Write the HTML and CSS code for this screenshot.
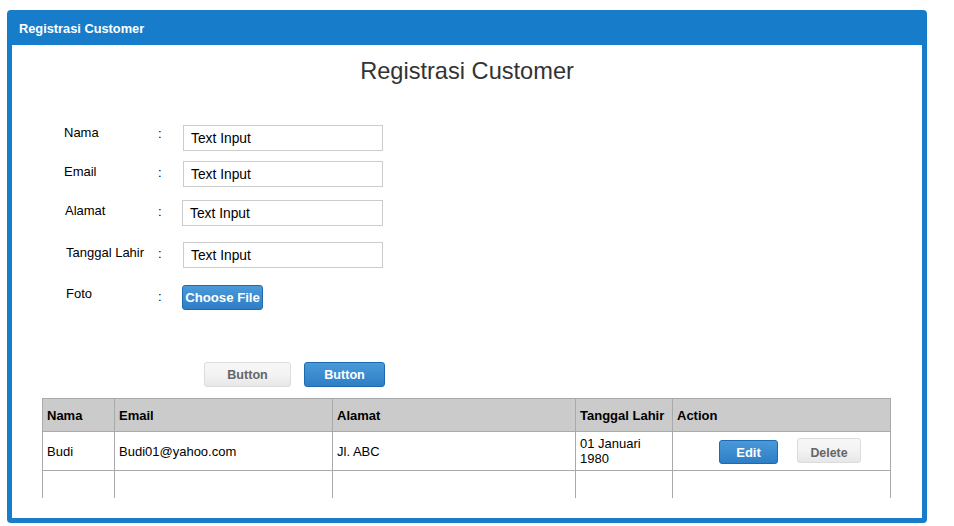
FILE: index.html
```html
<!DOCTYPE html>
<html>
<head>
<meta charset="utf-8">
<link rel="stylesheet" href="styles.css">
</head>
<body>
<div class="window">
  <div class="titlebar">Registrasi Customer</div>
  <div class="content">
    <h1 class="heading">Registrasi Customer</h1>
    <div class="form">
      <div class="row r1"><span class="label">Nama</span><span class="colon">:</span><div class="input">Text Input</div></div>
      <div class="row r2"><span class="label">Email</span><span class="colon">:</span><div class="input">Text Input</div></div>
      <div class="row r3"><span class="label l-shift1">Alamat</span><span class="colon">:</span><div class="input in-shift">Text Input</div></div>
      <div class="row r4"><span class="label l-shift2">Tanggal Lahir</span><span class="colon">:</span><div class="input">Text Input</div></div>
      <div class="row r5"><span class="label l-shift2">Foto</span><span class="colon">:</span><button class="btn btn-blue btn-file">Choose File</button></div>
    </div>
    <div class="actions">
      <button class="btn btn-gray btn-a">Button</button>
      <button class="btn btn-blue btn-b">Button</button>
    </div>
    <div class="table-wrap">
      <table class="grid">
        <colgroup>
          <col class="c1"><col class="c2"><col class="c3"><col class="c4"><col class="c5">
        </colgroup>
        <thead>
          <tr><th>Nama</th><th>Email</th><th>Alamat</th><th>Tanggal Lahir</th><th>Action</th></tr>
        </thead>
        <tbody>
          <tr class="data">
            <td>Budi</td><td>Budi01@yahoo.com</td><td>Jl. ABC</td><td>01 Januari<br>1980</td>
            <td><div class="act"><button class="btn btn-blue btn-edit">Edit</button><button class="btn btn-gray btn-del">Delete</button></div></td>
          </tr>
          <tr class="empty"><td></td><td></td><td></td><td></td><td></td></tr>
        </tbody>
      </table>
    </div>
  </div>
</div>
</body>
</html>
```
FILE: styles.css
```css
* { box-sizing: border-box; }
html, body { margin: 0; padding: 0; background: #fff; }
body { font-family: "Liberation Sans", Arial, sans-serif; color: #000; }

.window {
  margin: 10px 0 0 7px;
  width: 920px;
  height: 513px;
  background: #177dca;
  border-radius: 4px;
  padding: 0 5px 5px 5px;
  display: flex;
  flex-direction: column;
}
.titlebar {
  height: 35px;
  color: #fff;
  font-weight: bold;
  font-size: 12.8px;
  line-height: 37px;
  padding-left: 7px;
}
.content {
  flex: 1;
  background: #fff;
  overflow: hidden;
}
.heading {
  margin: 0;
  padding-top: 13px;
  text-align: center;
  font-weight: normal;
  font-size: 23.6px;
  line-height: 26px;
  color: #333;
  font-family: "Liberation Sans", Arial, sans-serif;
}

.form { padding-left: 52px; }
.row {
  display: grid;
  grid-template-columns: 94px 25px 200px;
  align-items: start;
  height: 26px;
}
.r1 { margin-top: 41px; }
.r2 { margin-top: 10px; }
.r3 { margin-top: 13px; }
.r4 { margin-top: 16px; }
.r5 { margin-top: 17px; height: 25px; }
.label { font-size: 13px; line-height: 15px; padding-top: 0; }
.r2 .label { padding-top: 3px; }
.r3 .label { padding-top: 3px; }
.r4 .label { padding-top: 3px; }
.r5 .label { padding-top: 1px; }
.l-shift1 { padding-left: 1px; }
.l-shift2 { padding-left: 2px; }
.colon { font-size: 13px; line-height: 15px; padding-top: 4px; }
.r1 .colon { padding-top: 1px; }
.input {
  height: 26px;
  border: 1px solid #ccc;
  font-size: 13.8px;
  line-height: 24px;
  padding: 1px 0 0 7px;
  color: #000;
}
.in-shift { margin-left: -1px; }

.btn {
  font-family: "Liberation Sans", Arial, sans-serif;
  font-weight: bold;
  font-size: 12.6px;
  border-radius: 3px;
  padding: 0;
  cursor: default;
}
.btn-blue {
  color: #fff;
  background: linear-gradient(#4a9ad9, #2d7ec6);
  border: 1px solid #1f6aae;
}
.btn-gray {
  color: #666;
  background: linear-gradient(#f7f7f7 0%, #f3f3f3 50%, #e7e7e7 100%);
  border: 1px solid #dcdcdc;
}
.btn-file { width: 81px; height: 25px; margin-left: -1px; font-size: 13.2px; }

.actions {
  display: flex;
  gap: 13px;
  margin-top: 52px;
  padding-left: 192px;
}
.btn-a { width: 87px; height: 25px; }
.btn-b { width: 81px; height: 25px; }

.table-wrap {
  margin: 11px 0 0 30px;
  width: 849px;
  height: 100px;
  overflow: hidden;
}
.grid {
  border-collapse: collapse;
  width: 848px;
  table-layout: fixed;
  font-size: 13px;
}
.c1 { width: 72px; }
.c2 { width: 218px; }
.c3 { width: 243px; }
.c4 { width: 97px; }
.c5 { width: 218px; }
.grid th, .grid td {
  border: 1px solid #aaa;
  text-align: left;
  padding: 0 4px;
  vertical-align: middle;
}
.grid th {
  background: #cbcbcb;
  font-weight: bold;
  height: 33px;
}
.grid tr.data td { height: 39px; line-height: 15px; }
.grid tr.empty td { height: 40px; }
.act {
  display: flex;
  align-items: flex-start;
  gap: 19px;
  padding-left: 42px;
}
.btn-edit { width: 59px; height: 24px; margin-top: 2px; font-size: 13px; }
.btn-del { width: 64px; height: 25px; font-size: 12.4px; line-height: 25px; padding-top: 2px; }
```
